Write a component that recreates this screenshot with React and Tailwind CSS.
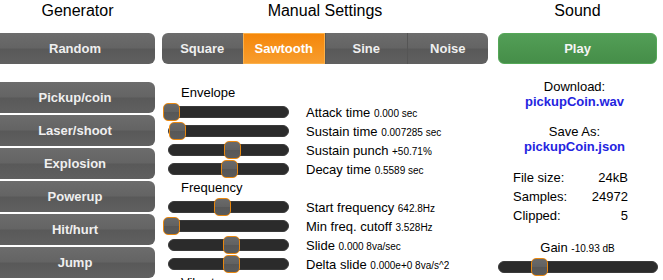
import React from "react";

const generators = ["Pickup/coin", "Laser/shoot", "Explosion", "Powerup", "Hit/hurt", "Jump"];
const waves = ["Square", "Sawtooth", "Sine", "Noise"];

const sections = [
  {
    title: "Envelope",
    rows: [
      { label: "Attack time", value: "0.000 sec", v: 0 },
      { label: "Sustain time", value: "0.007285 sec", v: 0.05 },
      { label: "Sustain punch", value: "+50.71%", v: 0.507 },
      { label: "Decay time", value: "0.5589 sec", v: 0.48 },
    ],
  },
  {
    title: "Frequency",
    rows: [
      { label: "Start frequency", value: "642.8Hz", v: 0.42 },
      { label: "Min freq. cutoff", value: "3.528Hz", v: 0 },
      { label: "Slide", value: "0.000 8va/sec", v: 0.495 },
      { label: "Delta slide", value: "0.000e+0 8va/s^2", v: 0.495 },
    ],
  },
  { title: "Vibrato", rows: [] },
];

const grayBtn =
  "bg-[linear-gradient(to_bottom,#6c6c6c_0%,#646464_48%,#595959_52%,#606060_100%)] text-[#efefef] font-bold text-[13px]";

function Slider({ v, width }) {
  return (
    <div
      className="relative h-[12px] rounded-full border border-[#3a3a3a] bg-[#2b2b2b]"
      style={{ width }}
    >
      <div
        className="absolute top-[-4px] h-[18px] w-[17px] rounded-[5px] border border-[#e8870f] bg-[linear-gradient(to_bottom,#6a6a6a_0%,#616161_50%,#575757_52%,#5b5b5b_100%)]"
        style={{ left: Math.round(v * width) - 6 }}
      />
    </div>
  );
}

export default function App() {
  return (
    <div className="h-[280px] w-[663px] overflow-hidden bg-white font-['Liberation_Sans',Arial,sans-serif] text-black">
      <div className="flex">
        {/* Generator */}
        <div className="ml-[-5px] w-[160px] shrink-0">
          <h2 className="h-[21px] pl-[5px] text-center text-[16px] leading-[21px]">Generator</h2>
          <button className={`mt-[12px] flex h-[31px] w-full items-center justify-center rounded-[6px] ${grayBtn}`}>
            Random
          </button>
          <div className="mt-[18px] flex flex-col gap-[2px]">
            {generators.map((g) => (
              <button
                key={g}
                className={`flex h-[31px] w-full items-center justify-center rounded-[6px] ${grayBtn}`}
              >
                {g}
              </button>
            ))}
          </div>
        </div>

        {/* Manual settings */}
        <div className="ml-[7px] w-[326px] shrink-0">
          <h2 className="h-[21px] text-center text-[16px] leading-[21px]">Manual Settings</h2>
          <div className="mt-[12px] flex h-[31px] overflow-hidden rounded-[6px]">
            {waves.map((w, i) =>
              w === "Sawtooth" ? (
                <div
                  key={w}
                  className="flex flex-1 items-center justify-center border border-[#fbb04a] bg-[linear-gradient(to_bottom,#f5870a_0%,#f6921c_50%,#f79d2e_100%)] text-[13px] font-bold text-white"
                >
                  {w}
                </div>
              ) : (
                <div
                  key={w}
                  className={`flex flex-1 items-center justify-center ${grayBtn} ${
                    i > 1 ? "border-l border-[#555555]" : ""
                  }`}
                >
                  {w}
                </div>
              )
            )}
          </div>
          <div className="mt-[19px]">
            {sections.map((s) => (
              <div key={s.title}>
                <div className="h-[19px] pl-[19px] text-[13px] leading-[19px]">{s.title}</div>
                {s.rows.map((r) => (
                  <div key={r.label} className="flex h-[19px] items-center">
                    <div className="ml-[6px]">
                      <Slider v={r.v} width={121} />
                    </div>
                    <div className="ml-[17px] mt-[2px] whitespace-nowrap text-[13px] leading-[15px]">
                      {r.label} <span className="text-[10px]">{r.value}</span>
                    </div>
                  </div>
                ))}
              </div>
            ))}
          </div>
        </div>

        {/* Sound */}
        <div className="ml-[10px] w-[159px] shrink-0">
          <h2 className="h-[21px] text-center text-[16px] leading-[21px]">Sound</h2>
          <button className="mt-[12px] flex h-[31px] w-full items-center justify-center rounded-[6px] border border-[#55a858] bg-[linear-gradient(to_bottom,#539e57_0%,#4c964f_50%,#458e49_100%)] text-[13px] font-bold text-[#f4f4f4]">
            Play
          </button>
          <div className="mt-[15px] pr-[6px] text-center text-[13px] leading-[15px]">
            <div>Download:</div>
            <div className="font-bold text-[#2424e0]">pickupCoin.wav</div>
          </div>
          <div className="mt-[15px] pr-[6px] text-center text-[13px] leading-[15px]">
            <div>Save As:</div>
            <div className="font-bold text-[#2424e0]">pickupCoin.json</div>
          </div>
          <div className="ml-[15px] mt-[14px] w-[115px] text-[13px]">
            {[
              ["File size:", "24kB"],
              ["Samples:", "24972"],
              ["Clipped:", "5"],
            ].map(([k, val]) => (
              <div key={k} className="flex h-[19px] items-center justify-between">
                <span>{k}</span>
                <span>{val}</span>
              </div>
            ))}
          </div>
          <div className="mt-[15px] text-center text-[13px] leading-[15px]">
            Gain <span className="text-[10px]">-10.93 dB</span>
          </div>
          <div className="mt-[5px]">
            <Slider v={0.236} width={160} />
          </div>
        </div>
      </div>
    </div>
  );
}
